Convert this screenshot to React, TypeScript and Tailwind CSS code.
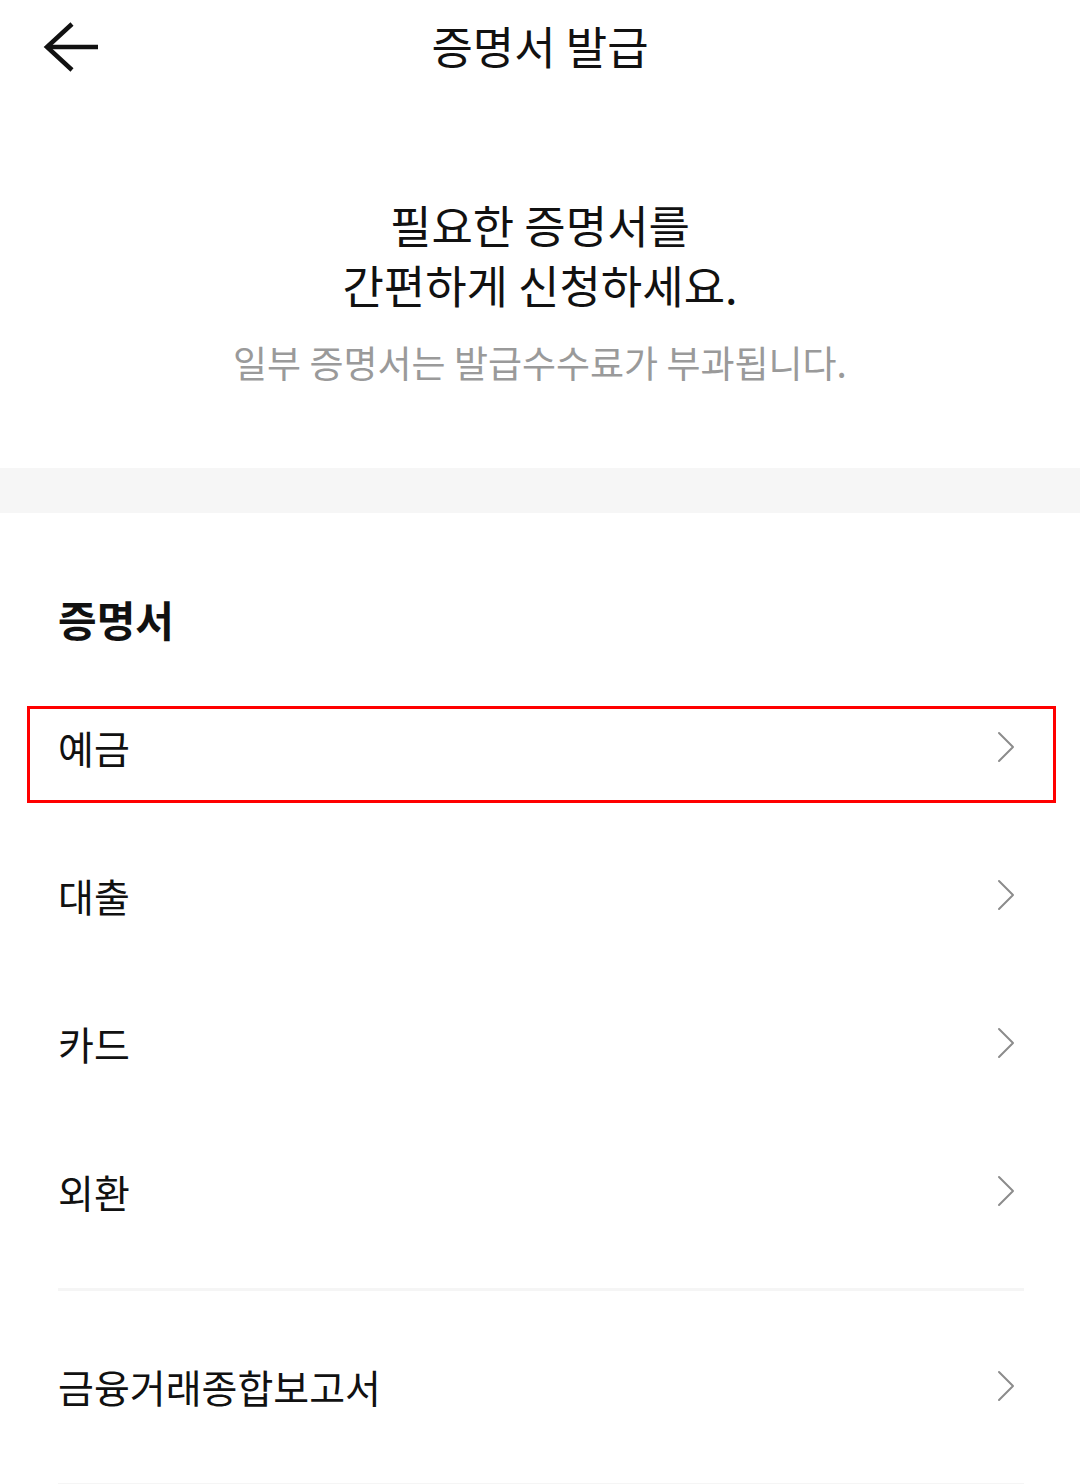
import React from "react";

const font = { fontFamily: '"Noto Sans CJK KR", "Noto Sans", sans-serif' };

function Chevron() {
  return (
    <svg width="18" height="32" viewBox="0 0 18 32" fill="none" className="mr-[9px] mb-[3px]">
      <path d="M2 2 L16 16 L2 30" stroke="#8c8c8c" strokeWidth="2" strokeLinecap="round" strokeLinejoin="round" />
    </svg>
  );
}

function Row({ label, highlight, className = "" }: { label: string; highlight?: boolean; className?: string }) {
  return (
    <div className={"relative flex h-[148px] items-center justify-between " + className}>
      <span className="mb-[2px] text-[39px] leading-[50px] text-[#111111]">{label}</span>
      <Chevron />
      {highlight && (
        <div className="pointer-events-none absolute left-[-31px] right-[-32px] top-[32px] h-[97px] border-[3px] border-[#ff0000]" />
      )}
    </div>
  );
}

export default function App() {
  return (
    <div className="min-h-[1484px] w-[1080px] bg-white" style={font}>
      <header className="grid h-[92px] grid-cols-[1fr_auto_1fr] items-center">
        <div className="flex items-center pl-[43px]">
          <svg width="58" height="52" viewBox="0 0 58 52" fill="none" className="mt-[2px]">
            <path d="M4 26 L55 26" stroke="#111" strokeWidth="4.5" strokeLinecap="butt" />
            <path d="M29 3 L4 26 L29 49" stroke="#111" strokeWidth="4.5" strokeLinecap="butt" strokeLinejoin="miter" />
          </svg>
        </div>
        <h1 className="text-[45px] leading-[60px] text-[#111111]">증명서 발급</h1>
        <div />
      </header>

      <section className="flex flex-col items-center pt-[103px] pb-[81px]">
        <p className="text-center text-[45px] leading-[60px] text-[#111111]">
          필요한 증명서를
          <br />
          간편하게 신청하세요.
        </p>
        <p className="mt-[22px] text-[37px] leading-[50px] text-[#9a9a9a]">
          일부 증명서는 발급수수료가 부과됩니다.
        </p>
      </section>

      <div className="h-[45px] bg-[#f6f6f6]" />

      <section className="pl-[58px] pr-[56px] pt-[81px]">
        <h2 className="text-[42px] font-bold leading-[50px] text-[#111111]">증명서</h2>
        <div className="mt-[30px]">
          <Row label="예금" highlight />
          <Row label="대출" />
          <Row label="카드" />
          <Row label="외환" />
        </div>
        <div className="mt-[22px] h-[3px] bg-[#f5f5f5]" />
        <Row label="금융거래종합보고서" className="mt-[22px]" />
        <div className="mt-[22px] h-[3px] bg-[#f5f5f5]" />
      </section>
    </div>
  );
}
